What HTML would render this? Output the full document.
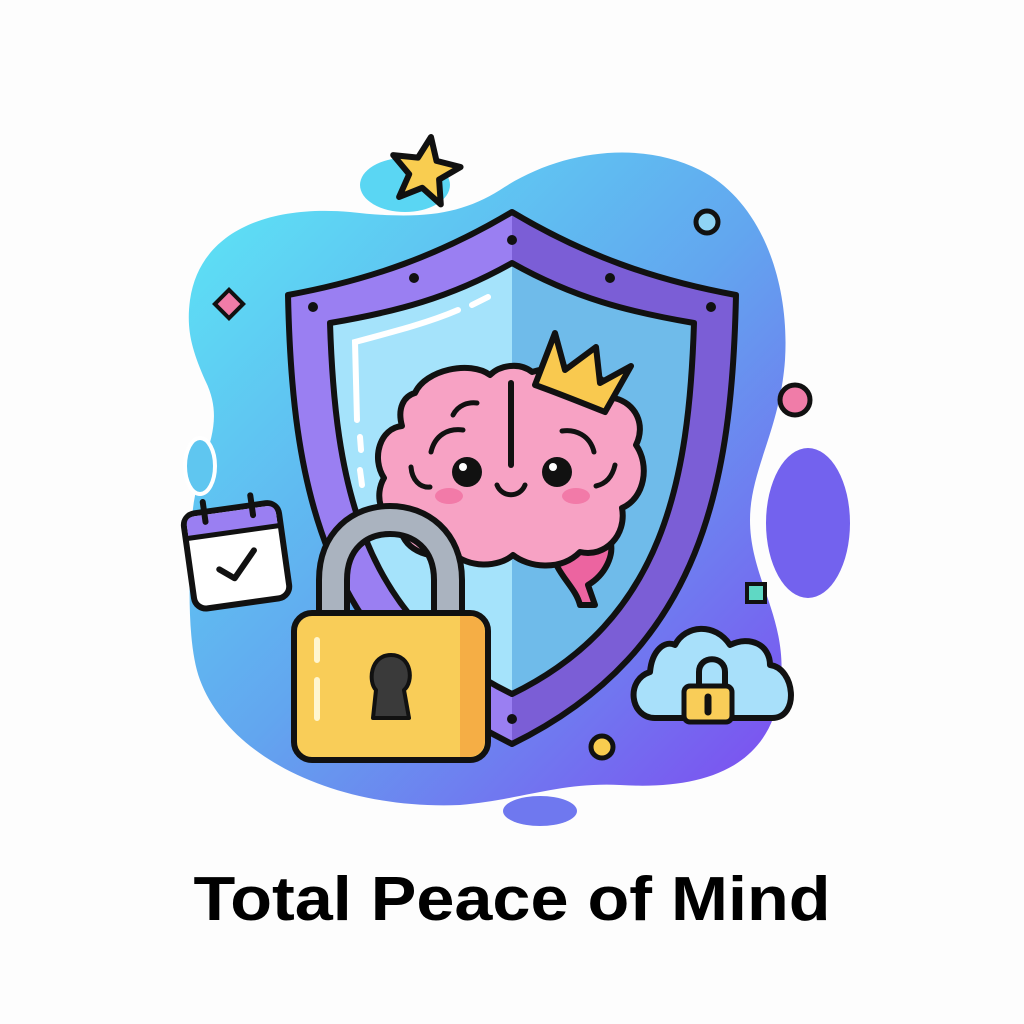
<!DOCTYPE html>
<html><head><meta charset="utf-8"><style>
html,body{margin:0;padding:0;background:#fff;width:1024px;height:1024px;overflow:hidden}
</style></head><body>
<svg width="1024" height="1024" viewBox="0 0 1024 1024" xmlns="http://www.w3.org/2000/svg">
<defs>
<linearGradient id="bg" x1="0.1" y1="0.1" x2="0.9" y2="0.95">
<stop offset="0" stop-color="#5ddcf4"/><stop offset="0.5" stop-color="#62a6ef"/><stop offset="1" stop-color="#7a58f0"/>
</linearGradient>
</defs>
<rect width="1024" height="1024" fill="#fdfdfd"/>
<path d="M190 300 C200 230 270 205 350 212 C420 220 460 215 500 190 C560 150 640 140 700 170 C760 200 790 280 785 360 C780 430 750 470 750 520 C750 580 790 620 780 690 C770 770 700 790 620 785 C560 782 520 800 460 805 C340 810 230 760 200 680 C185 640 190 560 192 520 C195 460 230 430 205 380 C192 350 186 330 190 300 Z" fill="url(#bg)"/>
<ellipse cx="405" cy="185" rx="45" ry="27" fill="#5ad6f3"/>
<ellipse cx="200" cy="466" rx="15" ry="28" fill="#5fc6f0" stroke="#fff" stroke-width="4"/>
<ellipse cx="808" cy="523" rx="42" ry="75" fill="#7362ee"/>
<ellipse cx="540" cy="811" rx="37" ry="15" fill="#6f78ef"/>
<circle cx="707" cy="222" r="11" fill="#8fd4f5" stroke="#111" stroke-width="5"/>
<circle cx="795" cy="400" r="15" fill="#f07ca8" stroke="#111" stroke-width="5"/>
<circle cx="602" cy="747" r="11" fill="#f8cc4f" stroke="#111" stroke-width="5"/>
<rect x="219" y="294" width="20" height="20" transform="rotate(45 229 304)" fill="#f07ca8" stroke="#111" stroke-width="4"/>
<rect x="747" y="584" width="18" height="18" fill="#5fd8c4" stroke="#111" stroke-width="4"/>
<path d="M431 137 L436.5 160.9 L460.6 167 L439.1 179.5 L440.8 204.4 L422.2 187.8 L399.1 197 L409.2 174.2 L393.2 155.1 L418 157.6 Z" fill="#f9cd50" stroke="#111" stroke-width="6" stroke-linejoin="round"/>
<path d="M512 212 C440 255 370 280 288 295 C292 480 320 650 512 744 Z" fill="#9a7ff2"/>
<path d="M512 212 C584 255 654 280 736 295 C732 480 704 650 512 744 Z" fill="#7b5ed6"/>
<path d="M512 212 C440 255 370 280 288 295 C292 480 320 650 512 744 C704 650 732 480 736 295 C654 280 584 255 512 212 Z" fill="none" stroke="#111" stroke-width="6" stroke-linejoin="round"/>
<path d="M512 263 C450 298 395 312 330 323 C335 480 360 620 512 694 Z" fill="#a5e3fb"/>
<path d="M512 263 C574 298 629 312 694 323 C689 480 664 620 512 694 Z" fill="#6fbbea"/>
<path d="M512 263 C450 298 395 312 330 323 C335 480 360 620 512 694 C664 620 689 480 694 323 C629 312 574 298 512 263 Z" fill="none" stroke="#111" stroke-width="6" stroke-linejoin="round"/>
<g fill="#111"><circle cx="512" cy="240" r="5"/><circle cx="414" cy="278" r="5"/><circle cx="610" cy="278" r="5"/><circle cx="313" cy="307" r="5"/><circle cx="711" cy="307" r="5"/><circle cx="512" cy="719" r="5"/></g>
<path d="M357 420 L355 342 C400 330 430 322 458 310 M472 305 L488 297 M360 437 L361 450 M360 470 L362 485" stroke="#fff" stroke-width="6" fill="none" stroke-linecap="round"/>
<path d="M550 545 C555 575 575 585 580 605 L595 605 L588 585 C605 575 615 555 610 540 Z" fill="#ec64a0" stroke="#111" stroke-width="6" stroke-linejoin="round"/>
<path d="M415 393 C425 370 470 360 490 375 C500 365 520 362 532 372 C565 362 605 368 614 398 C636 403 646 425 636 445 C650 465 645 498 622 508 C627 535 605 558 580 552 C560 572 528 567 513 555 C498 568 468 568 453 553 C428 562 400 547 401 526 C380 520 374 495 384 478 C371 458 380 428 402 426 C397 408 404 396 415 393 Z" fill="#f7a2c4" stroke="#111" stroke-width="6" stroke-linejoin="round"/>
<path d="M511 383 L511 465" stroke="#111" stroke-width="6" stroke-linecap="round"/>
<g fill="none" stroke="#111" stroke-width="5" stroke-linecap="round">
<path d="M453 415 C458 405 468 402 477 403"/><path d="M431 452 C435 435 448 428 463 430"/>
<path d="M411 467 C412 480 420 488 430 487"/><path d="M562 431 C575 429 590 435 594 452"/>
<path d="M615 465 C612 478 605 484 596 486"/><path d="M497 485 C502 498 520 498 525 485"/>
</g>
<circle cx="467" cy="472" r="15" fill="#111"/><circle cx="557" cy="472" r="15" fill="#111"/>
<circle cx="463" cy="467" r="4" fill="#fff"/><circle cx="553" cy="467" r="4" fill="#fff"/>
<ellipse cx="449" cy="496" rx="14" ry="8" fill="#f27aa8"/><ellipse cx="576" cy="496" rx="14" ry="8" fill="#f27aa8"/>
<path d="M535 385 L555 333 L565 370 L596 347 L600 383 L631 366 L605 412 C580 402 555 392 535 385 Z" fill="#f9c94f" stroke="#111" stroke-width="6" stroke-linejoin="round"/>
<path d="M333 615 L333 580 C333 540 360 520 390 520 C420 520 448 540 448 580 L448 615" fill="none" stroke="#111" stroke-width="34"/>
<path d="M333 615 L333 580 C333 540 360 520 390 520 C420 520 448 540 448 580 L448 615" fill="none" stroke="#aab3bf" stroke-width="22"/>
<rect x="294" y="613" width="194" height="147" rx="18" fill="#f9cd58" stroke="#111" stroke-width="6"/>
<path d="M460 616 L470 616 C480 616 485 625 485 635 L485 740 C485 750 478 757 468 757 L460 757 Z" fill="#f5ae45"/>
<path d="M317 640 L317 660 M317 680 L317 718" stroke="#fff6d0" stroke-width="6" stroke-linecap="round"/>
<path d="M376 690 C368 682 370 655 391 655 C412 655 414 682 404 690 L409 718 L373 718 Z" fill="#3a3a3a" stroke="#111" stroke-width="4" stroke-linejoin="round"/>
<g transform="rotate(-8 235 552)">
<rect x="188" y="508" width="96" height="96" rx="12" fill="#fff" stroke="#111" stroke-width="6"/>
<path d="M191 530 L191 520 C191 512 196 511 200 511 L272 511 C278 511 281 514 281 520 L281 530 Z" fill="#9a7ff2"/>
<path d="M188 532 L284 532" stroke="#111" stroke-width="5"/>
<path d="M210 498 L210 518 M258 498 L258 518" stroke="#111" stroke-width="6" stroke-linecap="round"/>
<path d="M217 567 L231 578 L254 553" fill="none" stroke="#111" stroke-width="6" stroke-linecap="round" stroke-linejoin="round"/>
</g>
<path d="M655 718 C630 718 625 680 650 672 C652 650 665 640 675 645 C685 625 715 622 730 645 C750 635 770 645 770 665 C795 668 800 718 772 718 Z" fill="#a8e0fa" stroke="#111" stroke-width="6" stroke-linejoin="round"/>
<path d="M699 688 L699 672 C699 655 725 655 725 672 L725 688" fill="none" stroke="#111" stroke-width="6"/>
<rect x="684" y="686" width="48" height="36" rx="6" fill="#f9cd58" stroke="#111" stroke-width="5"/>
<path d="M708 697 L708 712" stroke="#111" stroke-width="7" stroke-linecap="round"/>
<text x="512" y="920" text-anchor="middle" font-family="Liberation Sans, sans-serif" font-weight="700" font-size="62" fill="#000" textLength="637" lengthAdjust="spacingAndGlyphs">Total Peace of Mind</text>
</svg>
</body></html>
